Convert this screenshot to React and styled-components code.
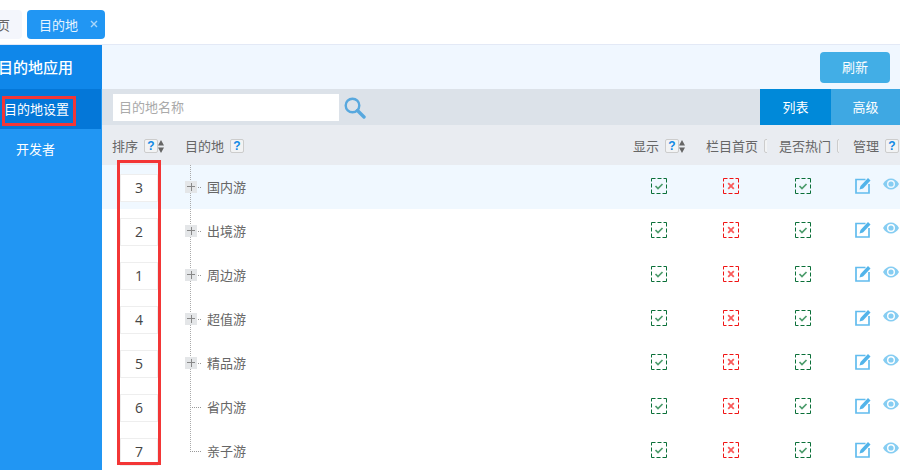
import styled, { createGlobalStyle } from "styled-components";

const GlobalStyle = createGlobalStyle`
  html, body {
    margin: 0;
    height: 100%;
    overflow: hidden;
    background: #fff;
  }
  body {
    font-family: "Noto Sans CJK SC", "Liberation Sans", sans-serif;
    font-size: 13px;
    color: #666;
  }
`;

const Page = styled.div`
  width: 900px;
  height: 470px;
  display: flex;
  flex-direction: column;
  overflow: hidden;
`;

// top tabs
const TabBar = styled.div`
  height: 44px;
  flex: none;
  display: flex;
  gap: 5px;
  border-bottom: 1px solid #e3e9f6;
  margin-left: -28px;
`;

const Tab = styled.div`
  height: 29px;
  margin-top: 10px;
  box-sizing: border-box;
  display: flex;
  align-items: center;
  gap: 12px;
  padding: 0 ${(p) => (p.$active ? "7px" : "12px")} 1px 12px;
  border-radius: 4px;
  white-space: nowrap;
  background: ${(p) => (p.$active ? "#2196f3" : "#f4f6fc")};
  color: ${(p) => (p.$active ? "#e6f4ff" : "#666")};
`;

const Body = styled.div`
  flex: 1;
  display: flex;
  min-height: 0;
`;

// left menu
const Sidebar = styled.div`
  width: 102px;
  flex: none;
  background: #2196f3;
  color: #fff;
  white-space: nowrap;
  overflow: hidden;
`;

const SideTitle = styled.div`
  height: 44px;
  line-height: 44px;
  font-size: 15px;
  font-weight: 500;
  background: #0f87ea;
  margin-left: -2px;
`;

const SideItem = styled.div`
  height: 40px;
  line-height: 40px;
  padding-left: ${(p) => p.$indent}px;
  width: ${(p) => (p.$active ? "101px" : "auto")};
  box-sizing: border-box;
  background: ${(p) => (p.$active ? "#0477d8" : "transparent")};
`;

const Main = styled.div`
  flex: 1;
  min-width: 0;
  position: relative;
  display: flex;
  flex-direction: column;
`;

const Toolbar = styled.div`
  height: 44px;
  flex: none;
  background: #f0f7ff;
  display: flex;
  align-items: center;
  justify-content: flex-end;
  padding-right: 10px;
`;

const RefreshButton = styled.button`
  width: 70px;
  height: 31px;
  border: 0;
  border-radius: 4px;
  background: #42aee6;
  color: #fff;
  font: inherit;
  padding: 0 0 2px;
`;

const SearchRow = styled.div`
  height: 36px;
  flex: none;
  background: #dce2e9;
  display: flex;
  padding-left: 11px;
`;

const SearchInput = styled.input`
  width: 226px;
  height: 27px;
  margin-top: 5px;
  border: 0;
  outline: 0;
  padding: 0 6px 2px;
  box-sizing: border-box;
  background: #fff;
  font: inherit;
  &::placeholder {
    color: #aaa;
    opacity: 1;
  }
`;

const SearchIcon = styled.svg`
  width: 22px;
  height: 22px;
  margin: 8px 0 0 5px;
`;

const ViewTabs = styled.div`
  margin-left: auto;
  display: flex;
`;

const ViewTab = styled.div`
  width: ${(p) => p.$width}px;
  line-height: 35px;
  text-align: center;
  color: #fff;
  background: ${(p) => (p.$active ? "#0089d9" : "#3ea8e3")};
`;

// table
const columns = "83px 438px 72px 72px 72px 61px";

const HeadRow = styled.div`
  height: 40px;
  flex: none;
  display: grid;
  grid-template-columns: ${columns};
  background: #e9ecf1;
`;

const HeadCell = styled.div`
  display: flex;
  align-items: center;
  overflow: hidden;
  white-space: nowrap;
  padding: 1px 0 0 ${(p) => p.$pad}px;
  color: #666;
`;

const Help = styled.span`
  flex: none;
  width: 14px;
  height: 14px;
  box-sizing: border-box;
  margin: 1px 0 0 6px;
  border: 1px solid #ccc;
  border-radius: 2px;
  background: #f2f3f4;
  color: #1289e4;
  font: bold 12px/12px "Liberation Sans", sans-serif;
  text-align: center;
`;

const SortArrows = styled.svg`
  flex: none;
  width: 6px;
  height: 13px;
  margin-top: 1px;
`;

const Row = styled.div`
  height: 44px;
  flex: none;
  display: grid;
  grid-template-columns: ${columns};
  background: ${(p) => (p.$hot ? "#f0f8ff" : "#fff")};
`;

const OrderCell = styled.div`
  padding: 9px 0 0 18px;
`;

const OrderInput = styled.input`
  display: block;
  width: 38px;
  height: 28px;
  box-sizing: border-box;
  border: 1px solid #eee;
  outline: 0;
  padding: 0 0 2px;
  background: #fff;
  color: #444;
  font: 14px "Open Sans", sans-serif;
  text-align: center;
`;

const TreeCell = styled.div`
  display: flex;
  align-items: center;
`;

const TreeName = styled.span`
  margin-top: -2px;
`;

const TreeGuide = styled.div`
  width: 22px;
  height: 100%;
  flex: none;
  display: flex;
  align-items: center;
  background-image:
    repeating-linear-gradient(to bottom, #aaa 0 1px, transparent 1px 2px),
    repeating-linear-gradient(to right, #999 0 1px, transparent 1px 2px);
  background-repeat: no-repeat;
  background-size: 1px ${(p) => (p.$last ? "50%" : "100%")}, 11px 1px;
  background-position: 5px 0, 5px 22px;
`;

const Expander = styled.span`
  width: 12px;
  height: 12px;
  margin-top: -1px;
  display: block;
  background:
    linear-gradient(#888, #888) center / 8px 1px no-repeat,
    linear-gradient(#888, #888) center / 1px 8px no-repeat,
    #e4e6e8;
`;

const CheckCell = styled.div`
  display: flex;
  justify-content: center;
  padding-top: 13px;
`;

const ActionCell = styled.div`
  display: flex;
  gap: 12px;
  padding: 12px 0 0 16px;
`;

// red markers drawn on top of the page
const Marker = styled.div`
  position: absolute;
  box-sizing: border-box;
  border: 3px solid #f33636;
  left: ${(p) => p.$left}px;
  top: ${(p) => p.$top}px;
  width: ${(p) => p.$width}px;
  height: ${(p) => p.$height}px;
`;

const Mark = ({ ok }) => (
  <svg width="16" height="16" viewBox="0 0 16 16" fill="none">
    <rect
      x="0.5"
      y="0.5"
      width="15"
      height="15"
      stroke={ok ? "#0a6f38" : "#f01414"}
      strokeDasharray="4 2 4 2 3 0"
    />
    {ok ? (
      <path d="M4.5 8l2.500 2.500 4.500-4.500" stroke="#4c9c6c" strokeWidth="1.700" />
    ) : (
      <path d="M5.200 5.200l5.600 5.600M10.800 5.200l-5.600 5.600" stroke="#f95a5a" strokeWidth="1.800" />
    )}
  </svg>
);

const EditIcon = () => (
  <svg width="16" height="17" viewBox="0 0 16 17" fill="none">
    <path d="M10.500 2.500H1v13.500h13V7" stroke="#62bcee" strokeWidth="1.700" />
    <path d="M4.500 12.500l1-3.500 7.500-8 2.500 2.500-7.500 8z" fill="#52b4ea" />
  </svg>
);

const EyeIcon = () => (
  <svg width="16" height="14" viewBox="0 0 16 14">
    <path
      fillRule="evenodd"
      d="M0 7c2-3.600 4.800-5.500 8-5.500S14 3.400 16 7c-2 3.600-4.800 5.500-8 5.500S2 10.600 0 7zm8-4a4 4 0 100 8 4 4 0 000-8z"
      fill="#86cdf2"
    />
    <circle cx="8" cy="7" r="2.600" fill="#86cdf2" />
  </svg>
);

const Sort = () => (
  <SortArrows viewBox="0 0 6 13">
    <path d="M3 0l3 5.500H0zM3 13L0 7.500h6z" fill="#666" />
  </SortArrows>
);

const rows = [
  { order: 3, name: "国内游", more: true },
  { order: 2, name: "出境游", more: true },
  { order: 1, name: "周边游", more: true },
  { order: 4, name: "超值游", more: true },
  { order: 5, name: "精品游", more: true },
  { order: 6, name: "省内游" },
  { order: 7, name: "亲子游", last: true },
];

export default function App() {
  return (
    <Page>
      <GlobalStyle />
      <TabBar>
        <Tab>首页</Tab>
        <Tab $active>
          目的地
          <svg width="8" height="8" viewBox="0 0 8 8">
            <path d="M1 1l6 6M7 1L1 7" stroke="#a9d6fa" strokeWidth="1.400" />
          </svg>
        </Tab>
      </TabBar>
      <Body>
        <Sidebar>
          <SideTitle>目的地应用</SideTitle>
          <SideItem $active $indent={4}>目的地设置</SideItem>
          <SideItem $indent={16}>开发者</SideItem>
        </Sidebar>
        <Main>
          <Toolbar>
            <RefreshButton>刷新</RefreshButton>
          </Toolbar>
          <SearchRow>
            <SearchInput placeholder="目的地名称" />
            <SearchIcon viewBox="0 0 22 22" fill="none">
              <circle cx="8.500" cy="8.500" r="6.800" stroke="#58a8de" strokeWidth="2.400" />
              <path d="M13.500 13.500l6.500 6.500" stroke="#58a8de" strokeWidth="3.400" strokeLinecap="round" />
            </SearchIcon>
            <ViewTabs>
              <ViewTab $active $width={71}>列表</ViewTab>
              <ViewTab $width={69}>高级</ViewTab>
            </ViewTabs>
          </SearchRow>
          <HeadRow>
            <HeadCell $pad={10}>排序<Help>?</Help><Sort /></HeadCell>
            <HeadCell $pad={0}>目的地<Help>?</Help></HeadCell>
            <HeadCell $pad={10}>显示<Help>?</Help><Sort /></HeadCell>
            <HeadCell $pad={11}>栏目首页<Help>?</Help></HeadCell>
            <HeadCell $pad={12}>是否热门<Help>?</Help></HeadCell>
            <HeadCell $pad={14}>管理<Help>?</Help></HeadCell>
          </HeadRow>
          {rows.map((row, i) => (
            <Row key={row.order} $hot={i === 0}>
              <OrderCell>
                <OrderInput readOnly value={row.order} />
              </OrderCell>
              <TreeCell>
                <TreeGuide $last={row.last}>
                  {row.more && <Expander />}
                </TreeGuide>
                <TreeName>{row.name}</TreeName>
              </TreeCell>
              <CheckCell><Mark ok /></CheckCell>
              <CheckCell><Mark /></CheckCell>
              <CheckCell><Mark ok /></CheckCell>
              <ActionCell>
                <EditIcon />
                <EyeIcon />
              </ActionCell>
            </Row>
          ))}
          <Marker $left={15} $top={115} $width={44} $height={305} />
        </Main>
        <Marker $left={2} $top={96} $width={74} $height={30} />
      </Body>
    </Page>
  );
}
